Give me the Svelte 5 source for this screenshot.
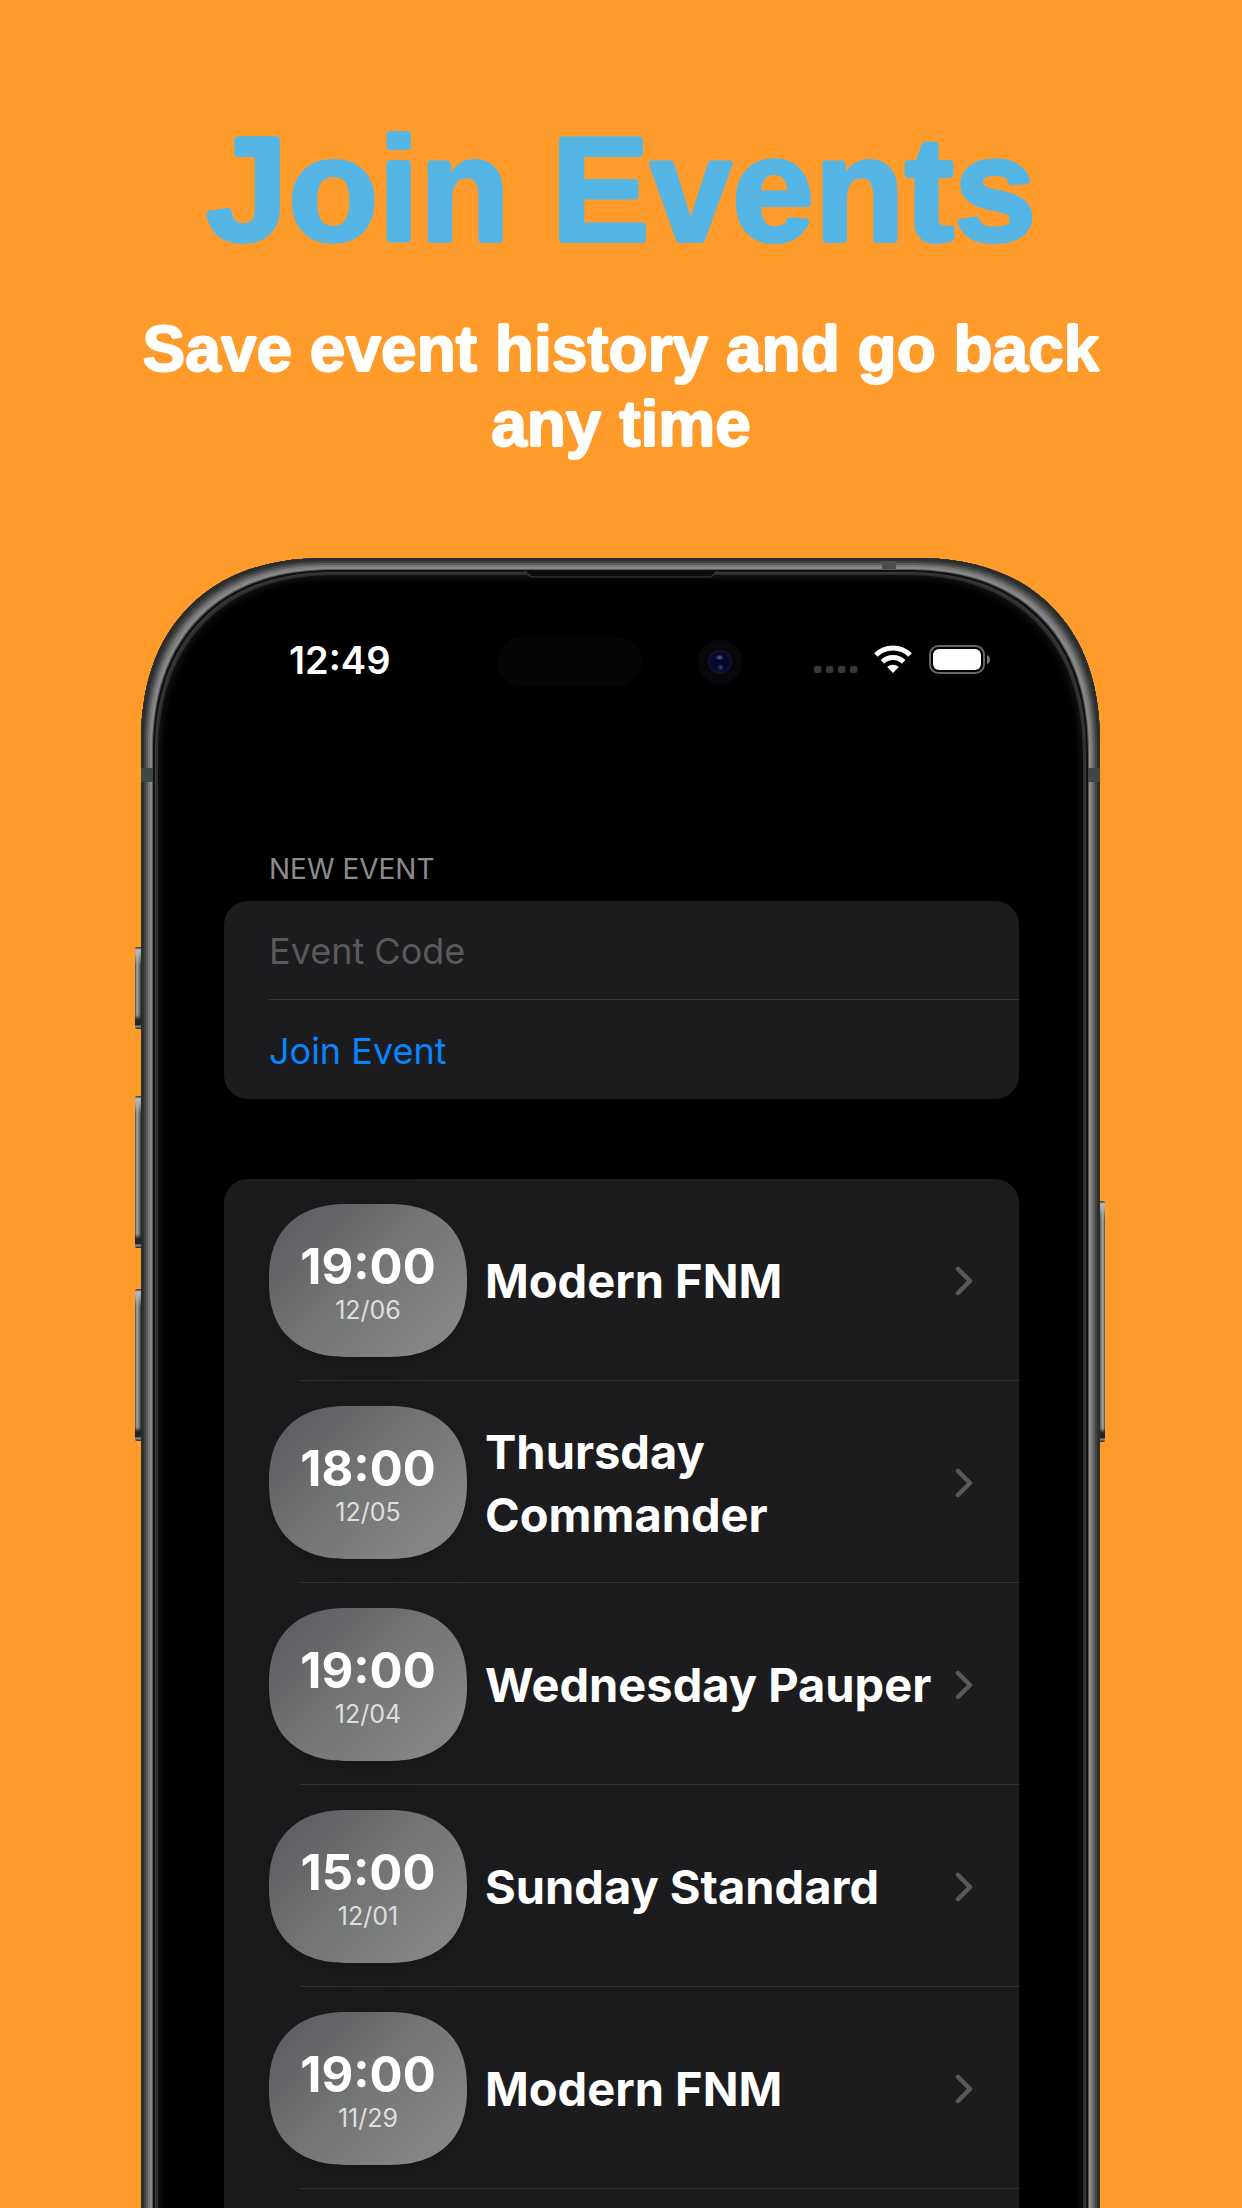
<script>
  let code = $state('');
  const events = [
    { time: '19:00', date: '12/06', name: 'Modern FNM' },
    { time: '18:00', date: '12/05', name: 'Thursday Commander' },
    { time: '19:00', date: '12/04', name: 'Wednesday Pauper' },
    { time: '15:00', date: '12/01', name: 'Sunday Standard' },
    { time: '19:00', date: '11/29', name: 'Modern FNM' }
  ];
</script>

<main>
  <header>
    <h1>Join Events</h1>
    <p>Save event history and go back any time</p>
  </header>

  <div class="device">
    <span class="key key-action"></span>
    <span class="key key-up"></span>
    <span class="key key-down"></span>
    <span class="key key-power"></span>

    <div class="phone">
      <span class="band band-left"></span>
      <span class="band band-right"></span>
      <span class="band band-top"></span>
      <svg class="speaker" viewBox="0 0 194 8" aria-hidden="true">
        <path d="M0 0H194Q191 1 190 3Q188 6 185 6H9Q6 6 4 3Q3 1 0 0Z" fill="#0c0c0c" />
        <path d="M0 0Q3 1 4 3Q6 6 9 6H185Q188 6 190 3Q191 1 194 0" fill="none" stroke="#303131" stroke-width="1.4" />
      </svg>

      <div class="status">
        <time>12:49</time>
        <span class="sensor"></span>
        <svg class="camera" viewBox="0 0 44 44" aria-hidden="true">
          <defs>
            <radialGradient id="lens">
              <stop offset="0" stop-color="#060622" />
              <stop offset="0.7" stop-color="#07072a" />
              <stop offset="1" stop-color="#14152f" />
            </radialGradient>
            <radialGradient id="glint">
              <stop offset="0" stop-color="#6466b0" />
              <stop offset="1" stop-color="#6466b0" stop-opacity="0" />
            </radialGradient>
            <radialGradient id="glow">
              <stop offset="0" stop-color="#2b4f80" />
              <stop offset="1" stop-color="#143050" stop-opacity="0" />
            </radialGradient>
          </defs>
          <circle cx="22" cy="22" r="22" fill="#08070a" />
          <circle cx="22" cy="22" r="12" fill="url(#lens)" />
          <ellipse cx="21.5" cy="17.5" rx="4.5" ry="3" fill="url(#glint)" />
          <ellipse cx="22.5" cy="27.5" rx="4" ry="4" fill="url(#glow)" />
        </svg>
        <div class="signals">
          <svg width="44" height="28" viewBox="0 0 44 28" aria-hidden="true" fill="#383838">
            <rect x="0" y="21" width="7.4" height="7" rx="2" />
            <rect x="12" y="21" width="7.4" height="7" rx="2" />
            <rect x="24" y="21" width="7.4" height="7" rx="2" />
            <rect x="36" y="21" width="7.4" height="7" rx="2" />
          </svg>
          <svg class="wifi" width="38" height="28" viewBox="0 0 38 28" aria-hidden="true">
            <g fill="none" stroke="#fff" stroke-width="5">
              <path d="M1.9 10A24.4 24.4 0 0 1 36.1 10" />
              <path d="M8.4 16.9A15.2 15.2 0 0 1 29.6 16.9" />
            </g>
            <path d="M19 28L13.2 22.1A8.2 8.2 0 0 1 24.8 22.1Z" fill="#fff" />
          </svg>
          <svg class="battery" width="62" height="29" viewBox="0 0 62 29" aria-hidden="true">
            <rect x="1" y="1" width="54" height="27" rx="8.5" fill="none" stroke="#666" stroke-width="2" />
            <rect x="4" y="4" width="48" height="21" rx="6" fill="#fff" />
            <path d="M58 10Q61 11 61 14.5Q61 18 58 19Z" fill="#777" />
          </svg>
        </div>
      </div>

      <section class="content">
        <form onsubmit={(e) => e.preventDefault()}>
          <label for="code">NEW EVENT</label>
          <div class="card">
            <input id="code" type="text" placeholder="Event Code" bind:value={code} />
            <button type="submit">Join Event</button>
          </div>
        </form>

        <ul class="card list">
          {#each events as event}
            <li>
              <a href="#event">
                <span class="badge">
                  <strong>{event.time}</strong>
                  <small>{event.date}</small>
                </span>
                <span class="name">{event.name}</span>
                <svg class="chevron" width="18" height="30" viewBox="0 0 18 30" aria-hidden="true">
                  <path d="M3 3L15 15L3 27" fill="none" stroke="#59595b" stroke-width="4.5" stroke-linecap="round" stroke-linejoin="round" />
                </svg>
              </a>
            </li>
          {/each}
        </ul>
      </section>
    </div>
  </div>
</main>

<style>
  :global(body) {
    margin: 0;
    background: #fe9b2b;
  }
  main {
    display: flex;
    flex-direction: column;
    min-height: 100vh;
    overflow: clip;
    background: #fe9b2b;
    color: #fff;
    font-family: Inter, 'Liberation Sans', sans-serif;
  }
  header {
    padding: 104px 120px 0;
    font-family: 'Arial Rounded MT Bold', 'Liberation Sans', sans-serif;
    text-align: center;
  }
  h1 {
    margin: 0;
    font-size: 148px;
    line-height: 172px;
    font-weight: 700;
    color: #55b6e5;
    text-shadow: 2px 0, -2px 0, 0 2px, 0 -2px, 1px 1px, -1px 1px, 1px -1px, -1px -1px;
  }
  p {
    margin: 36px 0 0;
    font-size: 64px;
    line-height: 75px;
    font-weight: 700;
    text-shadow: 1px 0, -1px 0, 0 1px, 0 -1px;
  }

  .device {
    position: relative;
    flex: 1 0 auto;
    display: flex;
    margin: 96px 142px -40px 141px;
  }
  .phone {
    position: relative;
    flex: 1;
    display: flex;
    flex-direction: column;
    min-width: 0;
    background: #000;
    border-radius: 186px 186px 0 0;
    corner-shape: superellipse(1.2);
    box-shadow:
      inset 0 0 0 1px #2a2b2b,
      inset 0 0 0 3px #2e3030,
      inset 0 0 0 5px #424343,
      inset 0 0 0 7px #5c5d5c,
      inset 0 0 0 9px #777877,
      inset 0 0 0 11px #888988,
      inset 0 0 0 12px #5a5b5a,
      inset 0 0 0 14px #101111,
      inset 0 0 0 15px #3c3e3e,
      inset 0 0 0 17px #2e2f2f,
      inset 0 0 8px 18px #1c1d1d;
  }
  .key {
    position: absolute;
    left: -6px;
    width: 8px;
    border-radius: 2px 0 0 2px;
    background: linear-gradient(#333 0, #bbb 3px, transparent 18px, transparent calc(100% - 14px), #222 calc(100% - 9px), #222 calc(100% - 4px), #999 calc(100% - 3px), #222 100%),
      linear-gradient(90deg, #444 0, #aaa 2px, #777 4px, #383a3a 6px);
  }
  .key-action { top: 389px; height: 82px; }
  .key-up { top: 538px; height: 152px; }
  .key-down { top: 731px; height: 152px; }
  .key-power {
    left: auto;
    right: -5px;
    top: 643px;
    height: 241px;
    transform: scaleX(-1);
  }
  .band {
    position: absolute;
    top: 210px;
    width: 12px;
    height: 14px;
    background: #3f4646;
  }
  .band-left { left: 0; }
  .band-right { right: 0; }
  .band-top { top: 3px; right: 204px; width: 14px; height: 8px; background: #4c4e4c; }
  .speaker {
    position: absolute;
    top: 13px;
    left: 50%;
    width: 194px;
    height: 8px;
    margin-left: -97px;
  }

  .status {
    position: relative;
    display: flex;
    justify-content: space-between;
    padding: 78px 109px 0 148px;
  }
  time {
    font-size: 38px;
    line-height: 48px;
    font-weight: 600;
  }
  .sensor {
    position: absolute;
    top: 79px;
    left: calc(50% - 124px);
    width: 145px;
    height: 49px;
    border-radius: 25px;
    background: #050505;
  }
  .camera {
    position: absolute;
    top: 82px;
    left: calc(50% + 77px);
    width: 44px;
    height: 44px;
  }
  .signals {
    display: flex;
    align-items: flex-start;
    padding-top: 9px;
  }
  .wifi { margin-left: 16px; }
  .battery { margin-left: 17px; }

  .content {
    flex: 1;
    display: flex;
    flex-direction: column;
    gap: 80px;
    padding: 167px 81px 0 83px;
  }
  label {
    display: block;
    padding: 0 45px 14px;
    font-size: 28px;
    line-height: 36px;
    color: #8b8b90;
  }
  .card {
    display: flex;
    flex-direction: column;
    border-radius: 24px;
    background: #1c1c1e;
  }
  input,
  button {
    box-sizing: border-box;
    height: 99px;
    margin: 0 0 0 45px;
    padding: 2px 0 0;
    border: 0;
    outline: 0;
    background: none;
    font: 400 36px/48px Inter, 'Liberation Sans', sans-serif;
    text-align: left;
  }
  input {
    border-bottom: 1px solid #38383a;
    color: #fff;
  }
  input::placeholder {
    color: #5a5a5d;
    opacity: 1;
  }
  button { color: #0a84ff; }

  .list {
    flex: 1;
    margin: 0;
    padding: 0 0 58px;
    list-style: none;
  }
  li::after {
    content: '';
    display: block;
    height: 1px;
    margin-left: 76px;
    background: #343437;
  }
  a {
    display: flex;
    align-items: center;
    height: 201px;
    padding: 2px 46px 0 45px;
    box-sizing: border-box;
    color: inherit;
    text-decoration: none;
  }
  .badge {
    box-sizing: border-box;
    flex: none;
    display: flex;
    flex-direction: column;
    align-items: center;
    justify-content: center;
    width: 198px;
    height: 153px;
    padding-top: 4px;
    border-radius: 80px / 76px;
    corner-shape: superellipse(1.25);
    background: linear-gradient(135deg, #605f64 12%, #727373 45%, #848585 85%);
    box-shadow: 0 6px 32px rgba(0, 0, 0, 0.25);
  }
  strong {
    font-size: 49px;
    line-height: 54px;
    font-weight: 700;
  }
  small {
    font-size: 25px;
    line-height: 32px;
    color: #dedede;
  }
  .name {
    flex: 1;
    padding-left: 18px;
    font-size: 47px;
    line-height: 63px;
    font-weight: 700;
  }
  .chevron { flex: none; }
</style>
